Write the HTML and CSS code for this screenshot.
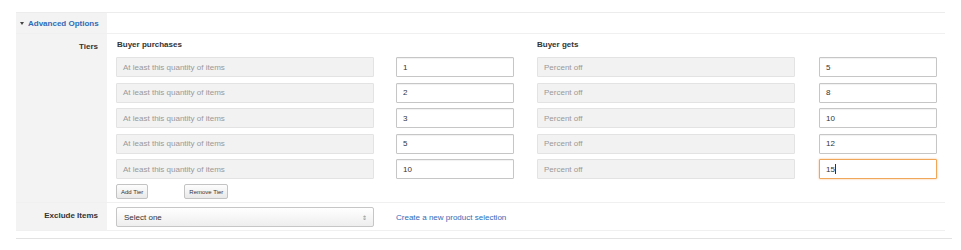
FILE: index.html
```html
<!DOCTYPE html>
<html lang="en">

<head>
  <meta charset="UTF-8">
  <title>Advanced Options</title>
  <link rel="stylesheet" href="styles.css">
</head>

<body>

  <div class="options">
    <!-- Header -->
    <div class="opt-row opt-head">
      <div class="opt-label">
        <a class="toggle" href="#"><span class="caret"></span>Advanced Options</a>
      </div>
      <div class="opt-body"></div>
    </div>

    <!-- Tiers -->
    <div class="opt-row">
      <div class="opt-label label-text">Tiers</div>
      <div class="opt-body tiers">
        <div class="tier-grid">
          <div class="col-title">Buyer purchases</div>
          <div></div>
          <div class="col-title">Buyer gets</div>
          <div></div>

          <div class="field field-ro">At least this quantity of items</div>
          <input class="field field-in" type="text" value="1">
          <div class="field field-ro">Percent off</div>
          <input class="field field-in" type="text" value="5">

          <div class="field field-ro">At least this quantity of items</div>
          <input class="field field-in" type="text" value="2">
          <div class="field field-ro">Percent off</div>
          <input class="field field-in" type="text" value="8">

          <div class="field field-ro">At least this quantity of items</div>
          <input class="field field-in" type="text" value="3">
          <div class="field field-ro">Percent off</div>
          <input class="field field-in" type="text" value="10">

          <div class="field field-ro">At least this quantity of items</div>
          <input class="field field-in" type="text" value="5">
          <div class="field field-ro">Percent off</div>
          <input class="field field-in" type="text" value="12">

          <div class="field field-ro">At least this quantity of items</div>
          <input class="field field-in" type="text" value="10">
          <div class="field field-ro">Percent off</div>
          <div class="field field-in field-focus">15<span class="cursor"></span></div>
        </div>
        <div class="tier-buttons">
          <button class="small-btn">Add Tier</button>
          <button class="small-btn">Remove Tier</button>
        </div>
      </div>
    </div>

    <!-- Exclude Items -->
    <div class="opt-row opt-last">
      <div class="opt-label label-text">Exclude Items</div>
      <div class="opt-body exclude">
        <div class="select-box">
          <span>Select one</span>
          <span class="select-arrow">&#8661;</span>
        </div>
        <a class="link" href="#">Create a new product selection</a>
      </div>
    </div>
  </div>

</body>

</html>
```

FILE: styles.css
```css
body {
  margin: 0;
  font-family: "Liberation Sans", Arial, sans-serif;
  font-size: 8px;
  color: #333;
  background-color: #fff;
}

.options {
  margin: 12px 16px 0 16px;
  width: 929px;
  border-top: 1px solid #ececec;
}

.options::after {
  content: "";
  display: block;
  width: 936px;
  margin-top: 7px;
  border-bottom: 1px solid #e2e2e2;
}

.opt-row {
  display: flex;
  border-bottom: 1px solid #f0f0f0;
}

.opt-label {
  width: 91px;
  flex-shrink: 0;
  background-color: #f3f3f3;
  box-sizing: border-box;
}

.opt-body {
  flex: 1;
  padding-left: 9px;
}

.opt-head {
  height: 20px;
}

.opt-head .opt-label {
  display: flex;
  align-items: center;
  padding-left: 4px;
}

.toggle {
  color: #2f6bb8;
  font-weight: bold;
  text-decoration: none;
}

.caret {
  display: inline-block;
  width: 0;
  height: 0;
  border-left: 2px solid transparent;
  border-right: 2px solid transparent;
  border-top: 3px solid #444;
  margin-right: 4px;
  vertical-align: 1px;
}

.label-text {
  text-align: right;
  padding-right: 9px;
  padding-top: 8px;
  font-weight: bold;
  color: #333;
}

/* Tiers */
.tiers {
  padding-top: 6px;
  padding-bottom: 3px;
}

.tier-grid {
  display: grid;
  grid-template-columns: 258px 140px 281px 142px;
  row-gap: 5.5px;
}

.tier-grid > :nth-child(4n+2),
.tier-grid > :nth-child(4n) {
  width: 118px;
  justify-self: end;
}

.tier-grid > :nth-child(4n+3) {
  width: 258px;
  justify-self: end;
}

.col-title {
  font-weight: bold;
  color: #333;
  padding-left: 1px;
  margin-bottom: 2.5px;
}

.field {
  box-sizing: border-box;
  height: 20px;
  margin: 0;
  padding: 0 6px;
  font-family: "Liberation Sans", Arial, sans-serif;
  font-size: 8px;
  display: flex;
  align-items: center;
  border-radius: 1px;
}

.field-ro {
  background-color: #f2f2f2;
  border: 1px solid #e3e3e3;
  color: #999;
}

.field-in {
  background-color: #fff;
  border: 1px solid #c6c6c6;
  box-shadow: inset 0 1px 1px rgba(0, 0, 0, 0.06);
  color: #333;
  outline: none;
}

.field-focus {
  border-color: #f0a75a;
  box-shadow: 0 0 2px rgba(240, 150, 60, 0.7);
}

.cursor {
  display: inline-block;
  width: 1px;
  height: 10px;
  background-color: #333;
}

.tier-buttons {
  display: flex;
  gap: 36px;
  margin-top: 5px;
}

.small-btn {
  height: 15px;
  padding: 0 4px;
  font-family: "Liberation Sans", Arial, sans-serif;
  font-size: 6px;
  color: #333;
  background: linear-gradient(#fdfdfd, #e9e9e9);
  border: 1px solid #c3c3c3;
  border-radius: 2px;
}

/* Exclude items */
.opt-last {
  height: 27px;
}

.exclude {
  display: flex;
  align-items: center;
  gap: 22px;
  padding-top: 1px;
}

.select-box {
  box-sizing: border-box;
  width: 258px;
  height: 20px;
  display: flex;
  align-items: center;
  justify-content: space-between;
  padding: 0 6px 0 7px;
  border: 1px solid #c6c6c6;
  border-radius: 2px;
  background: linear-gradient(#ffffff, #eeeeee);
  color: #333;
}

.select-arrow {
  font-size: 6px;
  color: #888;
}

.link {
  color: #2f6bb8;
  text-decoration: none;
}
```
